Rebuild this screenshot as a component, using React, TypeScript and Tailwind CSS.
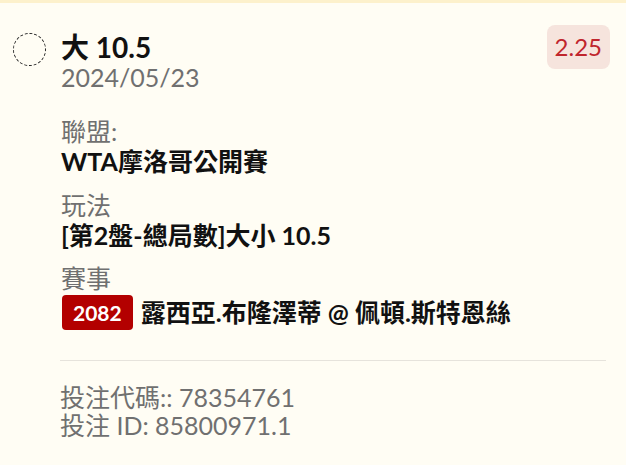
const FONT = { fontFamily: 'Lato, "Noto Sans CJK TC", sans-serif' };

function Field({ label, value }: { label: string; value: string }) {
  return (
    <div className="mt-[14px] first:mt-0">
      <div className="text-[25px] leading-[30px] text-[#707070]">{label}</div>
      <div className="text-[25px] leading-[30px] font-bold text-[#111]">{value}</div>
    </div>
  );
}

export default function App() {
  return (
    <div style={FONT} className="w-[626px] h-[465px] bg-[#fffdf4] overflow-hidden">
      <div className="h-[3px] bg-[#fdf1cc]" />
      <div className="flex items-start pt-[22px] pl-[13px] pr-[16px]">
        <span className="mt-[8px] h-[33px] w-[33px] shrink-0 rounded-full border border-dashed border-[#222]" />
        <div className="ml-[15px] mt-[7px] flex-1">
          <div className="text-[28px] leading-[30px] font-bold text-[#111]">大 10.5</div>
          <div className="text-[25px] leading-[30px] text-[#707070]">2024/05/23</div>
        </div>
        <div className="h-[44px] rounded-[8px] bg-[#f6e4dd] px-[8px] flex items-center text-[24px] text-[#c0262d]">
          2.25
        </div>
      </div>
      <div className="pl-[61px] pr-[20px] mt-[24px]">
        <Field label="聯盟:" value="WTA摩洛哥公開賽" />
        <Field label="玩法" value="[第2盤-總局數]大小 10.5" />
        <div className="mt-[13px]">
          <div className="text-[25px] leading-[30px] text-[#707070]">賽事</div>
          <div className="mt-[1px] flex items-center gap-[8px]">
            <span className="ml-[1px] h-[35px] rounded-[4px] bg-[#b30000] px-[11px] flex items-center text-[21px] font-bold text-white">
              2082
            </span>
            <span className="text-[25px] font-bold text-[#111]">露西亞.布隆澤蒂 @ 佩頓.斯特恩絲</span>
          </div>
        </div>
        <div className="-ml-px mt-[28px] h-px bg-[#e6e3dc]" />
        <div className="-ml-px mt-[22px] text-[25px] leading-[28px] text-[#707070]">
          <div>投注代碼:: 78354761</div>
          <div>投注 ID: 85800971.1</div>
        </div>
      </div>
    </div>
  );
}
